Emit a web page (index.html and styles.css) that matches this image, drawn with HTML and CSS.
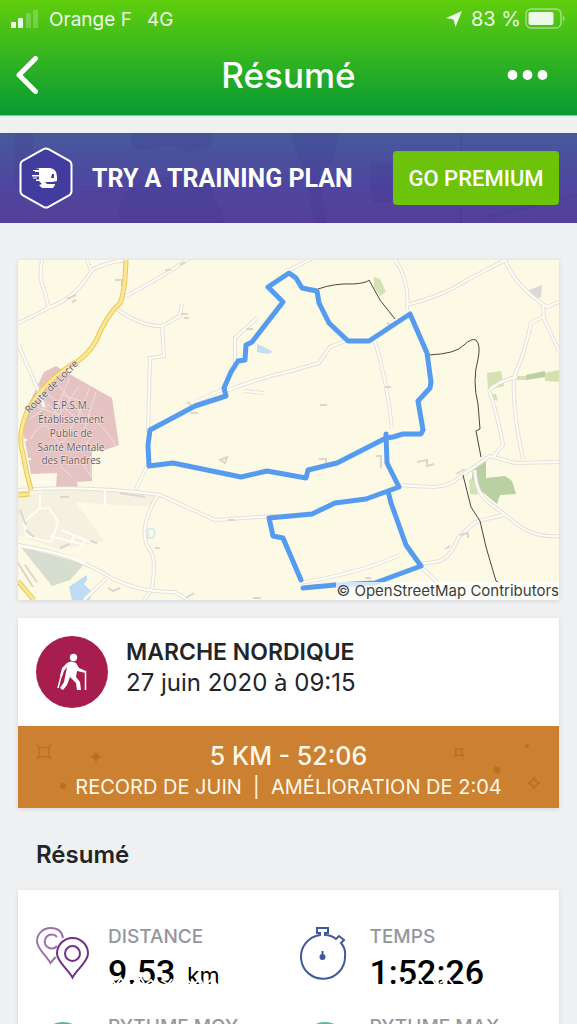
FILE: index.html
```html
<!DOCTYPE html>
<html lang="fr">
<head>
<meta charset="utf-8">
<meta name="viewport" content="width=device-width, initial-scale=1">
<title>Résumé</title>
<link rel="stylesheet" href="styles.css">
</head>
<body>
<div class="app">
  <header class="header">
    <div class="status">
      <svg class="signal" viewBox="0 0 28 20" aria-hidden="true"><rect x="0" y="13" width="5" height="6" rx="1"/><rect x="7" y="9" width="5" height="10" rx="1"/><g opacity=".25"><rect x="15" y="4" width="5" height="15" rx="1"/><rect x="22" y="1" width="5" height="18" rx="1"/></g></svg>
      <span>Orange F</span><span class="network">4G</span>
      <svg class="locate" viewBox="0 0 18 18" aria-hidden="true"><path d="M17 1 10.500 17 8.500 9.500 1 8Z"/></svg>
      <span class="charge">83 %</span>
      <svg class="battery" viewBox="0 0 40 22" aria-hidden="true"><rect x="1" y="1" width="35" height="19" rx="5" fill="none" stroke="#fff" stroke-width="1.500" opacity=".5"/><rect x="3.500" y="4" width="25" height="13" rx="2"/><path d="M38 7q3 3.500 0 7z" opacity=".55"/></svg>
    </div>
    <nav class="nav">
      <button class="nav-button" aria-label="Retour"><svg class="back" viewBox="0 0 22 38"><path d="M19.500 2.500 3 19l16.500 16.500"/></svg></button>
      <h1 class="title">Résumé</h1>
      <button class="nav-button more" aria-label="Plus"><svg class="dots" viewBox="0 0 42 12"><circle cx="5.500" cy="6" r="4.900"/><circle cx="20.500" cy="6" r="4.900"/><circle cx="35.500" cy="6" r="4.900"/></svg></button>
    </nav>
  </header>

  <section class="promo">
    <svg class="promo-art" viewBox="0 0 577 90" preserveAspectRatio="none" aria-hidden="true"><path d="M132 0c-6 12 6 18 12 18l24-6 20 8 22-7 4-13z"/><path d="M120 90c-5-20 8-35 26-43l58-9 22 52z"/><path d="M15 0h18v55H15zM290 0h48l-4 28-14 10 6 52h-12l-10-52z"/><path d="M370 30h22v40h-20zM460 0h2v90h-2zM80 58h70v2H80zM480 84l97-24v3l-80 21z"/></svg>
    <svg class="badge" viewBox="0 0 54 62" aria-hidden="true"><path class="badge-hex" d="M24.500 2.200 4 13.500Q1.500 15 1.500 18v26q0 3 2.500 4.500L24.500 59.800q2.500 1.400 5 0L50 48.500q2.500-1.500 2.500-4.500V18q0-3-2.500-4.500L29.500 2.200q-2.500-1.400-5 0Z"/><path class="badge-face" d="M19 21h12q7 1 7 9v4l-5 1h-7l2 2h8v1l-2 3H23l-3-3 3-1-3-3h-3v-1.500h3v-3h-7v-1.500h7v-3h-4v-1.500h4v-2h-4z"/><path class="badge-line" d="M14 23.500h6M14 31h4"/><path d="M33 27h2v4h-3z" fill="#413c9e"/></svg>
    <p class="promo-text">TRY A TRAINING PLAN</p>
    <button class="premium">GO PREMIUM</button>
  </section>

  <main class="content">
    <figure class="map card">
      <svg class="map-art" viewBox="18 260 541 340" role="img" aria-label="Carte du parcours">
        <rect x="18" y="260" width="541" height="340" fill="#fcf9e4"/>
        <g fill="#f4f1e0"><path d="M18 497 60 488 160 493 154 507 75 502 104 541 60 550 18 535z"/></g>
        <path fill="#d5decf" d="M20 546 84 564 70 580 52 586z"/>
        <path fill="#bfdcf5" d="M69 587 82 578l5-3 0 5-3 4 8 8-2 8H72z"/>
        <path fill="#c5dff0" d="M257 344l7 3 9 5-6 2-10-2z"/>
        <path fill="#e6c3c3" d="M44 372 56 366 64 371 112 398 119 445 102 451 92 449 92 481 77 482 78 487 56 487 57 473 31 474 23 430 27 408z"/>
        <path fill="none" stroke="#f2dddb" stroke-width="1" d="M35 392l24 23 20-29M29 404l47 17 14-34M52 377l31 38M39 387l36 30M96 392l-12 39M31 439q12-25 22-4t22-17M89 415q23 20 26 30M82 450l9-13M61 394l20 7M70 378l-14 31M30 419l20-15M83 464l8-8v21zM60 466l13 12"/>
        <g fill="#d4e2b3"><path d="M374 277l6 2 6 13-6 4-6-9z"/><path d="M487 373l14-2 3 15-16 4zM545 373l14-3v12l-14-1zM510 376h16v4h-16zM490 394h6l2 7-6-2zM469 480l14-8-6 23-7-1z"/></g>
        <path fill="#b9d0a2" d="M526 375l19-4v6l-19 3zM473 468l13-9v19l19-2 7 5 4 13-16 1-3 9-18-15-7-11zM517 433l4 7-3-1z"/>
        <path fill="#dcd8d7" d="M529 290l13-5-1 12-7 3z"/>
        <g class="road-edge"><path id="roads" d="M18 323q17-7 32-16 26-9 42-37 12-7 33-10M42 260q-4 19 3 32l4 17M87 260l4 10M126 296q30-15 64-38M118 310q25 17 44 16l18-10 2-12M162 326l2 30-14 2-2 74M18 344l21 48 5 15M235 369v-31l22-20M226 391q33-13 65-20l28-8 11-16 20-8M244 391l20 2M195 402l29-13M147 466l-11 23M285 272l34-17M395 260q15 20 12 50M407 305q38-10 60-25l42-22M505 260q10 26 42 47l12-5M543 306l1 13 15 32M543 317l-12 6q-6 30-17 54-2 30 9 82M489 390q12-10 28-13M489 390q10 30 14 55l-10 12M375 341q12 40 17 87M18 490q70-5 142 5l55 25q52-4 70-4M395 485l39 2q15 0 27-11l29-20 25 7 44-1M475 470q0 22 14 33 17 12 30 23 19 12 40 10M503 515l-28 7-17 16q-8 22-23 24l-15 2M157 496q-20 35-8 53 8 8 3 38M18 545q57 9 95 34 30 14 61 13l15 8M152 588l-8 12M420 566l17 16M300 583q60-10 100-28M84 600l5-5 17-16"/></g>
        <g class="road-fill"><use href="#roads"/><path d="M18 546q50 8 67 17M40 494v14l-16 14 2 14 25 6 7-20-9-14-9 1M50 536l35 9M62 530l30 13M67 550l7-14M77 553l9-14M105 490v16M19 483l34-1M18 470l12-1M19 460l12-1M18 440h9M18 425h7"/></g>
        <path class="houses" d="M115 280h7v7M67 299l9-4M72 302l4-2M165 270h6M180 265l5-3M181 314h7M184 318h5M246 329h7M187 402l6 5M190 413h8M220 460l7-3-2 6zM319 459h7v4M376 456h5v12M417 462l10-2v6l7-2M60 497h9M120 493l25 4M155 548h5M20 510l6 15M26 530l8 7M60 548l10-4M90 541l7 2M25 565l12 17M18 563l15 24M186 598l8-5M253 598h8M108 588l5 3 7-3M460 535l8-2v5M445 549l5-3M387 323l6 3M385 387h6M320 405h7M456 474l9-5M228 520h7M365 578h6M313 585h9"/>
        <path d="M148 529h6l1 4-2 5h-5z" fill="none" stroke="#bfdcf5"/>
        <g class="highway-edge"><path id="highway" d="M126 260q-1 33-6 43-14 13-24 38-10 17-25 24-30 20-44 47-10 24-4 42 3 18 8 36M18 495l12-1M18 581l16 19"/></g>
        <use class="highway-fill" href="#highway"/>
        <path class="trail" d="M318 289q17-6 35-5 14-1 16-4l11 20 15 19M428 355q28-1 36-10 7-7 12-5 5 5 2 19-6 22 0 45l2 25-4 2 5 26M463 475l8 32 9 14 6 26 10 34 3 2"/>
        <path class="route" d="M301 580 283 538 273 536 269 518 312 514 335 503 366 499 399 487 387 463 386 434M386 438 337 463 308 470 306 478 267 471 241 477 173 463 149 466 148 445 150 430 195 406 226 396 224 388 231 372 238 361 245 360 246 345 252 342 283 302 268 287 289 273 296 278 302 288 317 291 319 303 329 323 348 341 369 341 410 314 427 353 431 382 430 388 418 401 423 430 421 434 403 434 393 437 386 438M388 491 391 503 406 545 421 566 375 583 335 585 303 588"/>
        <g class="map-label"><text x="71" y="409">E.P.S.M.</text><text x="71" y="423">Établissement</text><text x="71" y="437">Public de</text><text x="71" y="451">Santé Mentale</text><text x="71" y="464">des Flandres</text><text transform="translate(54 389) rotate(-45)">Route de Locre</text></g>
      </svg>
      <figcaption class="credit">© OpenStreetMap Contributors</figcaption>
    </figure>

    <section class="activity card">
      <div class="activity-head">
        <svg class="sport" viewBox="0 0 72 72" aria-hidden="true"><circle cx="36" cy="36" r="36" fill="#a71d4d"/><circle cx="37.500" cy="21.500" r="3.700" fill="#fff"/><path fill="#fff" d="M31 27q4-3 9 0l3 5 7 3v2l-9-2-1 6 4 5 1 8h-4l-1-7-6-6-3 8-4 5-3-2 4-6 2-10 1-5-3 4-2 6-2-1 2-8z"/><path d="M26 37l-4 15M49.500 35v19" fill="none" stroke="#fff" stroke-width="1.500"/></svg>
        <div><h2 class="activity-name">MARCHE NORDIQUE</h2><p class="activity-date">27 juin 2020 à 09:15</p></div>
      </div>
      <div class="record">
        <svg class="sparks" viewBox="0 0 541 82" preserveAspectRatio="none" aria-hidden="true"><g fill="none" stroke="#b5691f" stroke-width="1.500" opacity=".75"><path d="M20 20q6 4 12 0-3 6 0 12-6-3-12 0 3-6 0-12zM437 22q4 3 8 0-2 4 0 8-4-2-8 0 2-4 0-8zM516 51q1 5 6 6-5 1-6 6-1-5-6-6 5-1 6-6z"/></g><g fill="#b5691f" opacity=".75"><path d="M78 25q1 5 6 6-5 1-6 6-1-5-6-6 5-1 6-6z"/><circle cx="45" cy="60" r="3"/><circle cx="479" cy="44" r="3.500"/><circle cx="509" cy="20" r="2"/></g></svg>
        <p class="record-value">5 KM - 52:06</p>
        <p class="record-note">RECORD DE JUIN&nbsp; |&nbsp; AMÉLIORATION DE 2:04</p>
      </div>
    </section>

    <h2 class="section-title">Résumé</h2>

    <section class="stats card">
      <div class="stat">
        <svg class="stat-icon" viewBox="0 0 54 54" fill="none" stroke-width="2" aria-hidden="true"><g stroke="#9f70ac"><path d="M27 12C26 5 21 2 14.500 2 7 2 1 8 1 15c0 8 9 14 13.500 22l5-6"/><path d="M21 20a7 7 0 1 1 0-9"/></g><g stroke="#70318e"><path d="M36.500 51.500C32 43 21 36 21 27.500a15.500 15.500 0 0 1 31 0C52 36 41 43 36.500 51.500z"/><circle cx="36.500" cy="27.500" r="7.500"/></g></svg>
        <div><h3 class="stat-label">DISTANCE</h3><p class="stat-value">9.53 <span class="unit">km</span></p></div>
        <svg class="wear" viewBox="0 0 140 12" aria-hidden="true"><path d="M0 3l5 2 3 4 5-7 5 8 4-4M25 8l8-6 4 7 6-5 6 6M53 4l7 4 4-5M79 4l6 5 7-6 4 7 8-7 5 6"/></svg>
      </div>
      <div class="stat">
        <svg class="stat-icon" viewBox="0 0 54 54" fill="none" stroke="#4058a0" stroke-width="2" aria-hidden="true"><path d="M22 9V7h-3V2h11v5h-3v2q6 0 11 4l3-3 5 4-3 3q5 6 4 13a22 22 0 1 1-25-21z"/><circle cx="24.500" cy="31" r="2" fill="#4058a0"/><path d="M24.500 25v5"/></svg>
        <div><h3 class="stat-label">TEMPS</h3><p class="stat-value">1:52:26</p></div>
        <svg class="wear" viewBox="0 0 140 12" aria-hidden="true"><path d="M16 2l4 7M24 2l7 6 7-5M42 6l7-4 5 6M62 3l4 6M70 7l8-5 5 6M89 3l8 5 7-4"/></svg>
      </div>
      <div class="stat">
        <svg class="stat-icon" viewBox="0 0 54 54" fill="none" stroke="#56b89a" stroke-width="2" aria-hidden="true"><circle cx="27" cy="29" r="22"/></svg>
        <div><h3 class="stat-label">RYTHME MOY.</h3></div>
      </div>
      <div class="stat">
        <svg class="stat-icon" viewBox="0 0 54 54" fill="none" stroke="#56b89a" stroke-width="2" aria-hidden="true"><circle cx="27" cy="29" r="22"/></svg>
        <div><h3 class="stat-label">RYTHME MAX.</h3></div>
      </div>
    </section>
  </main>
</div>
</body>
</html>
```
FILE: styles.css
```css
* { box-sizing: border-box; }
body, h1, h2, h3, p, figure { margin: 0; }
body { background: #eff0f2; color: #222528; font-family: Inter, "Liberation Sans", sans-serif; }
button { border: 0; padding: 0; font: inherit; color: inherit; background: none; cursor: pointer; }
svg { display: block; flex: none; }
.app { height: 100vh; overflow: hidden; }

.header { color: #fff; background: linear-gradient(#60ce0d, #079a33); padding-bottom: 4px; box-shadow: 0 1px 1px #9dbda5; }
.status { display: flex; align-items: center; height: 38px; padding: 0 12px 0 11px; font-size: 19px; opacity: .9; }
.signal { width: 28px; height: 20px; margin: 0 10px 0 0; fill: #fff; }
.network { margin-left: 15px; }
.locate { width: 18px; height: 18px; margin-left: auto; fill: #fff; }
.charge { margin: 0 4px 0 8px; font-size: 20px; }
.battery { width: 40px; height: 22px; fill: #fff; }
.nav { display: grid; grid-template-columns: 1fr auto 1fr; align-items: center; height: 73px; padding: 0 16px; }
.nav-button { justify-self: start; padding: 10px 0; }
.more { justify-self: end; padding: 10px 12px; }
.back { width: 22px; height: 38px; fill: none; stroke: #fff; stroke-width: 5; stroke-linecap: round; stroke-linejoin: round; }
.dots { width: 42px; height: 12px; fill: #fff; }
.title { font-size: 35px; font-weight: 500; line-height: 40px; }

.promo { position: relative; display: flex; align-items: center; height: 90px; margin-top: 18px; padding: 0 18px; background: linear-gradient(#47599b, #4f45a0 60%, #553f98); color: #fff; }
.promo-art { position: absolute; inset: 0; width: 100%; height: 100%; fill: #302b81; opacity: .12; }
.badge { position: relative; width: 56px; height: 62px; }
.badge-hex { fill: #413c9e; stroke: #fff; stroke-width: 2; }
.badge-face { fill: #fff; }
.badge-line { stroke: #fff; stroke-width: 1; }
.promo-text { position: relative; margin-left: 18px; font-family: Roboto, sans-serif; font-size: 25px; font-weight: 700; white-space: nowrap; }
.premium { position: relative; margin-left: auto; width: 166px; height: 54px; border-radius: 4px; background: #6cc309; font-family: Roboto, sans-serif; font-size: 22px; font-weight: 500; }

.content { padding: 37px 18px 0; }
.card { background: #fff; box-shadow: 0 1px 4px rgba(40, 45, 60, .14); }
.map { position: relative; }
.map-art { width: 100%; height: auto; }
.credit { position: absolute; right: 0; bottom: 0; background: rgba(255, 255, 255, .75); color: #3c3c3c; font-size: 15px; line-height: 18px; white-space: nowrap; }
.road-edge { fill: none; stroke: #e3e1da; stroke-width: 4; }
.road-fill { fill: none; stroke: #fffdf5; stroke-width: 2; }
.highway-edge { fill: none; stroke: #e7c85c; stroke-width: 5; }
.highway-fill { fill: none; stroke: #fbe794; stroke-width: 3; }
.houses { fill: none; stroke: #dcd6cf; stroke-width: 2; }
.trail { fill: none; stroke: #4b4742; stroke-width: 1; }
.route { fill: none; stroke: #559bf0; stroke-width: 5; stroke-linejoin: round; stroke-linecap: round; }
.map-label { font: 10px "Open Sans", "Noto Sans", sans-serif; fill: #65595f; stroke: #f8e9e4; stroke-width: 1; paint-order: stroke; text-anchor: middle; }

.activity { margin-top: 18px; }
.activity-head { display: flex; align-items: center; gap: 18px; padding: 18px; }
.sport { width: 72px; height: 72px; }
.activity-name { margin-top: -10px; font-size: 23px; font-weight: 600; line-height: 32px; }
.activity-date { font-size: 24px; line-height: 30px; }
.record { position: relative; padding: 14px 0 6px; background: #cb8032; color: #fff8e8; text-align: center; }
.sparks { position: absolute; inset: 0; width: 100%; height: 100%; }
.record-value { position: relative; font-size: 25px; font-weight: 500; line-height: 32px; }
.record-note { position: relative; font-size: 20px; line-height: 30px; white-space: nowrap; }
.section-title { margin: 32px 0 20px 18px; font-size: 24px; font-weight: 600; line-height: 30px; }

.stats { display: grid; grid-template-columns: 1fr 1fr; row-gap: 20px; padding: 36px 0 36px 18px; }
.stat { position: relative; display: flex; gap: 18px; }
.stat-icon { width: 54px; height: 54px; }
.stat-label { color: #94969f; font-size: 19px; font-weight: 500; line-height: 22px; }
.stat-value { color: #000; font: 500 34px/48px Roboto, sans-serif; white-space: nowrap; }
.unit { margin-left: 3px; font: 23px Inter, sans-serif; }
.wear { position: absolute; left: 72px; top: 50px; width: 140px; height: 12px; fill: none; stroke: #fff; stroke-width: 2; }
```
